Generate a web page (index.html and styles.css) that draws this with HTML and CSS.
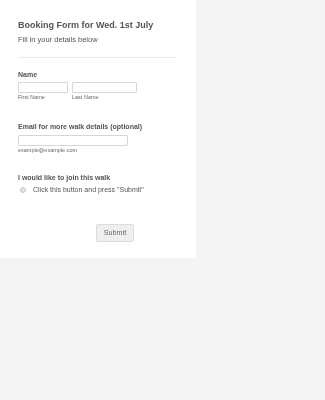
FILE: index.html
```html
<!DOCTYPE html>
<html lang="en">
<head>
<meta charset="utf-8">
<title>Booking Form</title>
<link rel="stylesheet" href="styles.css">
</head>
<body>
<form class="panel">
  <div class="header">
    <h1 class="title">Booking Form for Wed. 1st July</h1>
    <p class="subtitle">Fill in your details below</p>
  </div>
  <div class="field field-name">
    <div class="label">Name</div>
    <div class="row">
      <div class="sub">
        <span class="input input-first"></span>
        <span class="sublabel">First Name</span>
      </div>
      <div class="sub">
        <span class="input input-last"></span>
        <span class="sublabel">Last Name</span>
      </div>
    </div>
  </div>
  <div class="field field-email">
    <div class="label">Email for more walk details (optional)</div>
    <div class="sub">
      <span class="input input-email"></span>
      <span class="sublabel">example@example.com</span>
    </div>
  </div>
  <div class="field field-radio">
    <div class="label">I would like to join this walk</div>
    <div class="radio-row">
      <span class="radio"></span>
      <span class="radio-text">Click this button and press "Submit"</span>
    </div>
  </div>
  <div class="actions">
    <span class="button">Submit</span>
  </div>
</form>
</body>
</html>
```

FILE: styles.css
```css
html, body {
  margin: 0;
  padding: 0;
  background: #f4f4f4;
  font-family: "Liberation Sans", Arial, sans-serif;
  color: #555;
}
.panel {
  display: block;
  width: 196px;
  height: 258px;
  box-sizing: border-box;
  background: #fff;
  padding: 20px 19px 0 18px;
  will-change: transform;
  filter: grayscale(1);
}
.header {
  border-bottom: 1px solid #ececec;
  padding-bottom: 13px;
}
.title {
  margin: 0;
  font-size: 9px;
  line-height: 11px;
  font-weight: bold;
  color: #555;
}
.subtitle {
  margin: 4px 0 0;
  font-size: 7.5px;
  line-height: 9px;
  color: #555;
}
.label {
  font-size: 7px;
  line-height: 9px;
  font-weight: bold;
  color: #555;
}
.field-name {
  margin-top: 12px;
}
.field-email {
  margin-top: 21px;
}
.field-radio {
  margin-top: 19px;
}
.row {
  display: flex;
  gap: 4px;
  margin-top: 3px;
}
.sub {
  display: flex;
  flex-direction: column;
}
.field-email .sub {
  margin-top: 4px;
}
.input {
  display: block;
  height: 11px;
  box-sizing: border-box;
  border: 1px solid #d6d6d6;
  border-radius: 1px;
  background: #fff;
}
.input-first { width: 50px; }
.input-last { width: 65px; }
.input-email { width: 110px; }
.sublabel {
  margin-top: 1px;
  font-size: 5.5px;
  line-height: 7px;
  color: #666;
}
.radio-row {
  display: flex;
  align-items: center;
  margin-top: 3px;
  padding-left: 2px;
}
.radio {
  width: 6px;
  height: 6px;
  box-sizing: border-box;
  border-radius: 50%;
  border: 1px solid #c8c8c8;
  background: #e2e2e2;
  margin-right: 7px;
  margin-top: 1px;
}
.radio-text {
  font-size: 7px;
  line-height: 9px;
  color: #555;
}
.actions {
  margin-top: 27px;
  padding-left: 78px;
}
.button {
  display: inline-flex;
  align-items: center;
  justify-content: center;
  width: 38px;
  height: 18px;
  box-sizing: border-box;
  border: 1px solid #dcdcdc;
  border-radius: 2px;
  background: #efefef;
  font-size: 7.2px;
  color: #666;
}
```
